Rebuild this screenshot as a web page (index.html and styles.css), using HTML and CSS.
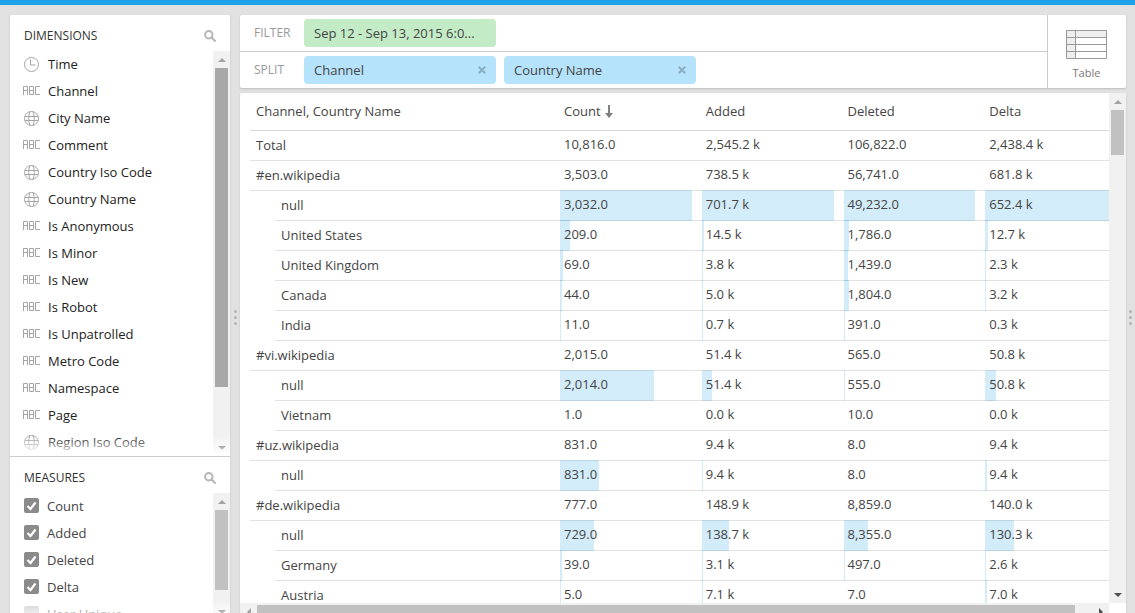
FILE: index.html
```html
<!DOCTYPE html>
<html lang="en">
<head>
<meta charset="utf-8">
<title>Wikipedia data cube</title>
<link rel="stylesheet" href="styles.css">
</head>
<body>
<svg class="sprite" aria-hidden="true">
  <symbol id="i-clock" viewBox="0 0 16 16"><circle cx="8.500" cy="8.500" r="7"/><path d="M7.500 3.500v5.500h5"/></symbol>
  <symbol id="i-globe" viewBox="0 0 16 16"><circle cx="8.500" cy="8.500" r="7"/><path d="M2 6.500h13M2 10.500h13M7 1.500C5.300 5.500 5.300 11.500 7 15.500M10 1.500c1.700 4 1.700 10 0 14"/></symbol>
  <symbol id="i-string" viewBox="0 0 18 9"><path d="M.5 9V.5h4V9M.5 4.500h4M6.500.5h4v8h-4zM6.500 4.500h4M17 .5h-4.500v8H17"/></symbol>
  <symbol id="i-search" viewBox="0 0 12 12"><circle cx="4.800" cy="4.800" r="3.700"/><path d="M7.300 7.300l4.300 4.300"/></symbol>
  <symbol id="i-close" viewBox="0 0 8 8"><path d="M.7.700l6.600 6.600M7.300.700L.7 7.300"/></symbol>
</svg>

<header class="topbar"></header>
<div class="workspace">
  <aside class="sidebar panel">
    <section class="tile dimensions">
      <div class="tile-head"><h2>DIMENSIONS</h2><button class="icon-button" aria-label="Search dimensions"><svg class="search"><use href="#i-search"/></svg></button></div>
      <div class="tile-body">
        <ul class="list">
          <li><svg class="round"><use href="#i-clock"/></svg>Time</li>
          <li><svg class="string"><use href="#i-string"/></svg>Channel</li>
          <li><svg class="round"><use href="#i-globe"/></svg>City Name</li>
          <li><svg class="string"><use href="#i-string"/></svg>Comment</li>
          <li><svg class="round"><use href="#i-globe"/></svg>Country Iso Code</li>
          <li><svg class="round"><use href="#i-globe"/></svg>Country Name</li>
          <li><svg class="string"><use href="#i-string"/></svg>Is Anonymous</li>
          <li><svg class="string"><use href="#i-string"/></svg>Is Minor</li>
          <li><svg class="string"><use href="#i-string"/></svg>Is New</li>
          <li><svg class="string"><use href="#i-string"/></svg>Is Robot</li>
          <li><svg class="string"><use href="#i-string"/></svg>Is Unpatrolled</li>
          <li><svg class="string"><use href="#i-string"/></svg>Metro Code</li>
          <li><svg class="string"><use href="#i-string"/></svg>Namespace</li>
          <li><svg class="string"><use href="#i-string"/></svg>Page</li>
          <li><svg class="round"><use href="#i-globe"/></svg>Region Iso Code</li>
        </ul>
        <div class="scrollbar"><i class="arrow up"></i><div class="rail"><div class="thumb active"></div></div><i class="arrow down"></i></div>
      </div>
    </section>
    <section class="tile measures">
      <div class="tile-head"><h2>MEASURES</h2><button class="icon-button" aria-label="Search measures"><svg class="search"><use href="#i-search"/></svg></button></div>
      <div class="tile-body">
        <ul class="list">
          <li><label><input type="checkbox" checked>Count</label></li>
          <li><label><input type="checkbox" checked>Added</label></li>
          <li><label><input type="checkbox" checked>Deleted</label></li>
          <li><label><input type="checkbox" checked>Delta</label></li>
          <li><label><input type="checkbox">User Unique</label></li>
        </ul>
        <div class="scrollbar"><i class="arrow up"></i><div class="rail"><div class="thumb"></div></div><i class="arrow down"></i></div>
      </div>
    </section>
  </aside>
  <div class="grip"><i></i><i></i><i></i></div>
  <main class="main">
    <div class="controls panel">
      <div class="shelves">
        <div class="shelf"><span class="shelf-name">FILTER</span><button class="chip filter">Sep 12 - Sep 13, 2015 6:0...</button></div>
        <div class="shelf">
          <span class="shelf-name">SPLIT</span>
          <div class="chip split">Channel<button class="icon-button" aria-label="Remove Channel"><svg class="close"><use href="#i-close"/></svg></button></div>
          <div class="chip split">Country Name<button class="icon-button" aria-label="Remove Country Name"><svg class="close"><use href="#i-close"/></svg></button></div>
        </div>
      </div>
      <button class="vis">
        <svg class="vis-icon" viewBox="0 0 41 29"><path class="shade" d="M0 0h41v8H9v21H0z"/><path d="M.5.500h40v28H.5zM9.500 0v29M0 7.500h41M0 14.500h41M0 21.500h41"/></svg>
        Table
      </button>
    </div>
    <div class="result panel">
      <div class="viewport">
        <div class="pane">
          <table>
            <colgroup><col class="c-name"><col><col><col><col></colgroup>
            <thead>
              <tr><th>Channel, Country Name</th><th>Count<svg class="sort" viewBox="0 0 8 13"><path d="M3 0h2v8h3L4 13 0 8h3z"/></svg></th><th>Added</th><th>Deleted</th><th>Delta</th></tr>
            </thead>
            <tbody>
              <tr><th>Total</th><td>10,816.0</td><td>2,545.2 k</td><td>106,822.0</td><td>2,438.4 k</td></tr>
              <tr><th>#en.wikipedia</th><td>3,503.0</td><td>738.5 k</td><td>56,741.0</td><td>681.8 k</td></tr>
              <tr class="sub"><th><div>null</div></th><td><i style="width:100%"></i>3,032.0</td><td><i style="width:100%"></i>701.7 k</td><td><i style="width:100%"></i>49,232.0</td><td><i style="width:100%"></i>652.4 k</td></tr>
              <tr class="sub"><th><div>United States</div></th><td><i style="width:6.9%"></i>209.0</td><td><i style="width:1.4%"></i>14.5 k</td><td><i style="width:3.6%"></i>1,786.0</td><td><i style="width:2%"></i>12.7 k</td></tr>
              <tr class="sub"><th><div>United Kingdom</div></th><td><i style="width:2.3%"></i>69.0</td><td><i style="width:.5%"></i>3.8 k</td><td><i style="width:2.9%"></i>1,439.0</td><td><i style="width:.4%"></i>2.3 k</td></tr>
              <tr class="sub"><th><div>Canada</div></th><td><i style="width:1.5%"></i>44.0</td><td><i style="width:.7%"></i>5.0 k</td><td><i style="width:3.7%"></i>1,804.0</td><td><i style="width:.5%"></i>3.2 k</td></tr>
              <tr class="sub"><th><div>India</div></th><td><i style="width:.4%"></i>11.0</td><td><i style="width:.1%"></i>0.7 k</td><td><i style="width:.8%"></i>391.0</td><td><i style="width:0%"></i>0.3 k</td></tr>
              <tr><th>#vi.wikipedia</th><td>2,015.0</td><td>51.4 k</td><td>565.0</td><td>50.8 k</td></tr>
              <tr class="sub"><th><div>null</div></th><td><i style="width:66.4%"></i>2,014.0</td><td><i style="width:7.3%"></i>51.4 k</td><td><i style="width:1.1%"></i>555.0</td><td><i style="width:7.8%"></i>50.8 k</td></tr>
              <tr class="sub"><th><div>Vietnam</div></th><td>1.0</td><td>0.0 k</td><td>10.0</td><td>0.0 k</td></tr>
              <tr><th>#uz.wikipedia</th><td>831.0</td><td>9.4 k</td><td>8.0</td><td>9.4 k</td></tr>
              <tr class="sub"><th><div>null</div></th><td><i style="width:27.4%"></i>831.0</td><td><i style="width:1%"></i>9.4 k</td><td>8.0</td><td><i style="width:1.4%"></i>9.4 k</td></tr>
              <tr><th>#de.wikipedia</th><td>777.0</td><td>148.9 k</td><td>8,859.0</td><td>140.0 k</td></tr>
              <tr class="sub"><th><div>null</div></th><td><i style="width:24%"></i>729.0</td><td><i style="width:19%"></i>138.7 k</td><td><i style="width:17%"></i>8,355.0</td><td><i style="width:20%"></i>130.3 k</td></tr>
              <tr class="sub"><th><div>Germany</div></th><td><i style="width:1.3%"></i>39.0</td><td><i style="width:.1%"></i>3.1 k</td><td><i style="width:1%"></i>497.0</td><td><i style="width:.1%"></i>2.6 k</td></tr>
              <tr class="sub"><th><div>Austria</div></th><td><i style="width:.2%"></i>5.0</td><td><i style="width:1%"></i>7.1 k</td><td>7.0</td><td><i style="width:1%"></i>7.0 k</td></tr>
            </tbody>
          </table>
        </div>
        <div class="scrollbar"><i class="arrow up dim"></i><div class="rail"><div class="thumb"></div></div><i class="arrow down"></i></div>
      </div>
      <div class="scrollbar across"><i class="arrow left dim"></i><div class="rail"><div class="thumb"></div></div><i class="arrow right"></i></div>
    </div>
  </main>
  <div class="grip"><i></i><i></i><i></i></div>
</div>
</body>
</html>
```
FILE: styles.css
```css
* { box-sizing: border-box; }
body {
  margin: 0;
  height: 100vh;
  overflow: hidden;
  background: #e1e1e1;
  color: #444;
  font: 13px/18px "Open Sans", sans-serif;
}
button { border: 0; margin: 0; padding: 0; background: none; font: inherit; color: inherit; }
ul { list-style: none; margin: 0; padding: 0; }
svg { fill: none; stroke: #a5a5a5; flex: none; }
.sprite { display: none; }
.topbar { height: 5px; background: #1ea3e8; }

/* The workspace runs slightly past the bottom of the window. */
.workspace { display: flex; height: calc(100vh + 2px); padding: 10px 0 0 10px; }
.panel { background: #fff; border-radius: 2px; box-shadow: 0 1px 2px rgba(0, 0, 0, .16); overflow: hidden; }

.sidebar { width: 220px; flex: none; display: flex; flex-direction: column; color: #222; }
.tile { display: flex; flex-direction: column; min-height: 0; overflow: hidden; }
.dimensions { flex: 442 1 0; border-bottom: 1px solid #ccc; }
.measures { flex: 163 1 0; }
.tile-head { display: flex; align-items: center; justify-content: space-between; height: 36px; flex: none; padding: 5px 14px 0; }
.tile-head h2 { margin: 0; font-size: 12px; font-weight: 400; color: #333; }
.icon-button { display: flex; }
.search { width: 12px; height: 12px; stroke: #b5b5b5; stroke-width: 2; }
.tile-body { flex: 1; min-height: 0; display: flex; position: relative; overflow: hidden; }
.tile-body::after {
  content: "";
  position: absolute;
  left: 0; right: 0; bottom: 0;
  height: 20px;
  background: linear-gradient(rgba(255, 255, 255, 0), #fff);
}
.list { flex: 1; padding-left: 13px; }
.list li { display: flex; align-items: center; gap: 7px; height: 27px; padding-bottom: 2px; }
.string { width: 18px; height: 9px; }
.round { width: 16px; height: 16px; margin-right: 2px; }
.measures label { display: flex; align-items: center; gap: 8px; padding-left: 1px; color: #444; }
.measures input {
  appearance: none;
  width: 15px; height: 15px;
  margin: 0;
  border-radius: 2px;
  background: #ccc;
}
.measures input:checked {
  background: #8a8a8a url("data:image/svg+xml,%3Csvg xmlns='http://www.w3.org/2000/svg' viewBox='0 0 15 15'%3E%3Cpath d='M3.500 8l3 3L11.500 4.500' fill='none' stroke='white' stroke-width='2.200'/%3E%3C/svg%3E");
}

.scrollbar { width: 17px; flex: none; display: flex; flex-direction: column; background: #f1f1f1; }
.rail { flex: 1; min-height: 0; min-width: 0; padding: 0 2px; }
.thumb { height: 86%; background: #c1c1c1; }
.thumb.active { background: #a8a8a8; }
.arrow { width: 17px; height: 17px; flex: none; display: flex; align-items: center; justify-content: center; color: #505050; }
.sidebar .arrow.up, .arrow.dim { color: #a3a3a3; }
.arrow::after { content: ""; border: 4px solid transparent; }
.up::after { border-top: 0; border-bottom-color: currentColor; }
.down::after { border-bottom: 0; border-top-color: currentColor; }
.left::after { border-left: 0; border-right-color: currentColor; }
.right::after { border-right: 0; border-left-color: currentColor; }

.grip { width: 10px; flex: none; display: flex; flex-direction: column; align-items: center; justify-content: center; gap: 3px; }
.grip + .main + .grip { width: 9px; }
.grip i { width: 3px; height: 3px; border-radius: 50%; background: #b4b4b4; }

.main { flex: 1; min-width: 0; display: flex; flex-direction: column; gap: 5px; }
.controls { display: flex; flex: none; }
.shelves { flex: 1; min-width: 0; }
.shelf { display: flex; align-items: center; gap: 8px; height: 36px; padding-left: 14px; }
.shelf + .shelf { border-top: 1px solid #ccc; height: 37px; }
.shelf-name { width: 42px; font-size: 12px; color: #999; }
.chip { display: flex; align-items: center; justify-content: space-between; width: 192px; height: 28px; padding: 0 10px; border-radius: 4px; }
.filter { background: #c3ebc6; }
.split { background: #b5e3fb; }
.close { width: 8px; height: 8px; stroke: #8bafc2; stroke-width: 2; }
.vis { width: 79px; border-left: 1px solid #ccc; padding: 8px 1px 0 0; display: flex; flex-direction: column; align-items: center; justify-content: center; gap: 5px; font-size: 11px; color: #777; }
.vis-icon { width: 41px; height: 29px; stroke: #999; }
.shade { fill: #eee; stroke: none; }

.result { flex: 1; min-height: 0; display: flex; flex-direction: column; }
.viewport { flex: 1; min-height: 0; display: flex; }
.pane { flex: 1; min-width: 0; overflow: hidden; padding-left: 10px; }
table { table-layout: fixed; width: 100%; min-width: 877px; border-collapse: separate; border-spacing: 0; }
.c-name { width: 310px; }
th, td { height: 30px; padding: 0 0 3px 4px; border-bottom: 1px solid #e2e2e2; font-weight: 400; text-align: left; white-space: nowrap; }
td { position: relative; z-index: 0; }
td i { position: absolute; z-index: -1; top: -1px; bottom: -1px; left: 0; max-width: calc(100% - 10px); background: rgba(28, 162, 225, .2); }
thead th { height: 38px; padding-bottom: 2px; border-bottom-color: #d8d8d8; }
th:first-child { padding: 0 0 2px 6px; }
.sub th:first-child { padding: 0 0 0 25px; border-bottom: 0; }
.sub th div { height: 30px; padding: 5px 0 0 6px; border-bottom: 1px solid #e2e2e2; }
.sort { width: 8px; height: 13px; margin-left: 4px; vertical-align: -2px; fill: #808080; stroke: none; }
.result .viewport .thumb { height: 45px; }
.across { width: auto; height: 17px; flex-direction: row; margin-right: 17px; }
.across .rail { padding: 2px 0; }
.across .thumb { width: 98%; height: 100%; }
```
